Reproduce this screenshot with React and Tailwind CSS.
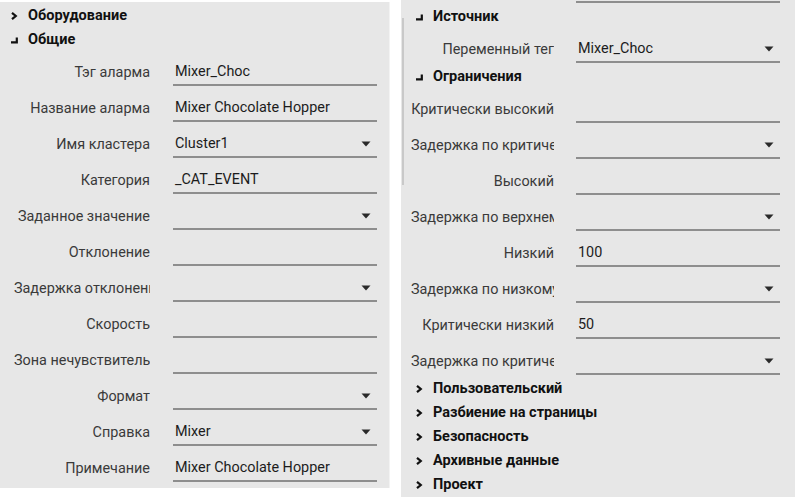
import React from "react";

const leftRows = [
  { label: "Тэг аларма", value: "Mixer_Choc" },
  { label: "Название аларма", value: "Mixer Chocolate Hopper" },
  { label: "Имя кластера", value: "Cluster1", drop: true },
  { label: "Категория", value: "_CAT_EVENT" },
  { label: "Заданное значение", value: "", drop: true },
  { label: "Отклонение", value: "" },
  { label: "Задержка отклонения", value: "", drop: true },
  { label: "Скорость", value: "" },
  { label: "Зона нечувствительности", value: "" },
  { label: "Формат", value: "", drop: true },
  { label: "Справка", value: "Mixer", drop: true },
  { label: "Примечание", value: "Mixer Chocolate Hopper" },
];

const limitRows = [
  { label: "Критически высокий", value: "" },
  { label: "Задержка по критически высокому", value: "", drop: true },
  { label: "Высокий", value: "" },
  { label: "Задержка по верхнему", value: "", drop: true },
  { label: "Низкий", value: "100" },
  { label: "Задержка по низкому", value: "", drop: true },
  { label: "Критически низкий", value: "50" },
  { label: "Задержка по критически низкому", value: "", drop: true },
];

const closedGroups = ["Пользовательский", "Разбиение на страницы", "Безопасность", "Архивные данные", "Проект"];

function Chevron() {
  return (
    <svg width="9" height="10" viewBox="0 0 9 10" className="shrink-0">
      <path d="M2 1.8 L5.8 5 L2 8.2" fill="none" stroke="#111" strokeWidth="2.2" />
    </svg>
  );
}

function Corner() {
  return (
    <svg width="9" height="10" viewBox="0 0 9 10" className="shrink-0">
      <path d="M6.8 2.5 V7.3 H1" fill="none" stroke="#111" strokeWidth="2.2" />
    </svg>
  );
}

function Arrow() {
  return (
    <svg width="10" height="6" viewBox="0 0 10 6" className="shrink-0">
      <path d="M0.5 0.5 H9.5 L5 5.5 Z" fill="#2a2a2a" />
    </svg>
  );
}

function Group({ title, open, iconPad }) {
  return (
    <div className={`flex h-6 items-center ${iconPad}`}>
      {open ? <Corner /> : <Chevron />}
      <span className="ml-[9px] text-[14.5px] font-bold text-[#111]">{title}</span>
    </div>
  );
}

function Field({ label, value, drop, labelBox }) {
  return (
    <div className="flex h-9">
      <div className={`${labelBox} h-[34px] pt-[7px] flex items-center justify-end overflow-hidden`}>
        <span className="whitespace-nowrap text-[14.4px] text-[#3a3a3a] text-right w-full overflow-hidden">{label}</span>
      </div>
      <div className="w-[204px] h-[34px] pt-[7px] pl-[2px] pr-[6px] flex items-center border-b-2 border-[#8e8e8e]">
        <span className="flex-1 whitespace-nowrap text-[14.4px] text-[#1c1c1c]">{value}</span>
        {drop && <Arrow />}
      </div>
    </div>
  );
}

export default function App() {
  return (
    <div className="flex w-[796px] h-[497px] bg-white overflow-hidden" style={{ fontFamily: "Roboto, 'Noto Sans', sans-serif" }}>
      <div className="mt-[2px] w-[390px] h-[486px] bg-[#e7e7e7] border-r border-[#f3f3f3] pt-[2px]">
        <Group title="Оборудование" iconPad="pl-[10px]" />
        <Group title="Общие" open iconPad="pl-[10px]" />
        {leftRows.map((r) => (
          <Field key={r.label} {...r} labelBox="ml-[14px] w-[136px] mr-[23px]" />
        ))}
      </div>
      <div className="relative ml-[11px] w-[394px] h-[497px] bg-[#e7e7e7]">
        <div className="absolute left-[1px] top-[18px] w-[2px] h-[167px] bg-[#c9c9c9]" />
        <div className="flex h-[5px]">
          <div className="ml-[175px] w-[204px] h-[3px] border-b-2 border-[#8e8e8e]" />
        </div>
        <Group title="Источник" open iconPad="pl-[14px]" />
        <Field label="Переменный тег" value="Mixer_Choc" drop labelBox="ml-[10px] w-[143px] mr-[22px]" />
        <Group title="Ограничения" open iconPad="pl-[14px]" />
        {limitRows.map((r, i) => (
          <Field key={i} {...r} labelBox="ml-[10px] w-[143px] mr-[22px]" />
        ))}
        {closedGroups.map((g) => (
          <Group key={g} title={g} iconPad="pl-[14px]" />
        ))}
      </div>
    </div>
  );
}
